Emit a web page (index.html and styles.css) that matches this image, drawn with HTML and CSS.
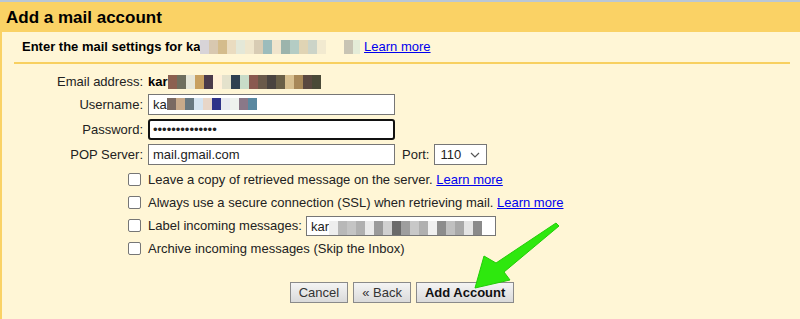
FILE: index.html
```html
<!DOCTYPE html>
<html lang="en">
<head>
  <meta charset="UTF-8" />
  <meta name="viewport" content="width=device-width, initial-scale=1.0" />
  <title>Add a mail account</title>
  <link rel="stylesheet" href="styles.css">
</head>
<body>
  <div class="dialog">
    <div class="dialog-head">Add a mail account</div>

    <div class="dialog-body">
      <div class="intro">
        Enter the mail settings for ka<span class="blur blur-intro"></span>
        <a href="#" class="link">Learn more</a>
      </div>
      <div class="rule"></div>

      <div class="form-row text-row">
        <label class="row-label">Email address:</label>
        <span class="email-value">kar<span class="blur blur-email"></span></span>
      </div>

      <div class="form-row">
        <label class="row-label" for="username">Username:</label>
        <div class="fake-input">ka<span class="blur blur-user"></span></div>
      </div>

      <div class="form-row">
        <label class="row-label" for="password">Password:</label>
        <input type="password" id="password" class="text-input focused" value="aaaaaaaaaaaaaa" />
      </div>

      <div class="form-row">
        <label class="row-label" for="pop">POP Server:</label>
        <input type="text" id="pop" class="text-input" value="mail.gmail.com" />
        <label class="port-label" for="port">Port:</label>
        <div class="fake-select">110
          <svg class="chev" width="10" height="6" viewBox="0 0 10 6"><path d="M1 1 L5 5 L9 1" fill="none" stroke="#555" stroke-width="1.2"/></svg>
        </div>
      </div>

      <div class="options">
        <div class="option">
          <span class="box"></span>
          <span>Leave a copy of retrieved message on the server. <a href="#" class="link">Learn more</a></span>
        </div>
        <div class="option">
          <span class="box"></span>
          <span>Always use a secure connection (SSL) when retrieving mail. <a href="#" class="link">Learn more</a></span>
        </div>
        <div class="option">
          <span class="box"></span>
          <span>Label incoming messages:</span>
          <div class="fake-input label-input">kar<span class="blur blur-label"></span></div>
        </div>
        <div class="option">
          <span class="box"></span>
          <span>Archive incoming messages (Skip the Inbox)</span>
        </div>
      </div>

      <div class="actions">
        <button class="btn">Cancel</button>
        <button class="btn">&laquo; Back</button>
        <button class="btn btn-main">Add Account</button>
      </div>
    </div>

    <svg class="arrow" width="800" height="319" viewBox="0 0 800 319">
      <polygon points="475,288 484,256 496,263 556,223 559,226 504,272 510,280" fill="#2ee80e" stroke="#22cc08" stroke-width="1" stroke-linejoin="round"/>
    </svg>
  </div>
</body>
</html>
```

FILE: styles.css
```css
* {
  box-sizing: border-box;
}

body {
  margin: 0;
  height: 319px;
  overflow: hidden;
  font-family: "Liberation Sans", Arial, sans-serif;
  font-size: 13px;
  color: #222;
  background: #fff6d6;
  border-top: 2px solid #b9c7d6;
}

.dialog {
  position: relative;
  height: 317px;
  border-left: 2px solid #fad265;
  background: #fff6d6;
}

.dialog-head {
  height: 30px;
  line-height: 31px;
  padding-left: 4px;
  background: #fad265;
  font-size: 17px;
  font-weight: bold;
  color: #000;
}

.dialog-body {
  padding: 7px 10px 0 12px;
}

.intro {
  padding-left: 8px;
  height: 16px;
  line-height: 16px;
  font-weight: bold;
  color: #000;
}

.link {
  color: #0000ee;
  font-weight: normal;
  text-decoration: underline;
}

.rule {
  height: 2px;
  margin-top: 7px;
  background: #f8d060;
}

.blur {
  display: inline-block;
  vertical-align: -3px;
}

.blur-intro {
  width: 160px;
  height: 14px;
  background:
    linear-gradient(90deg, #d8d4d8 0 9px, #d8c8b0 9px 18px, #d4bc8c 18px 27px, #eadcc0 27px 36px, #e4e8d8 36px 45px, #efe6cc 45px 54px, #d8ccb4 54px 63px, #9cbcbc 63px 72px, #f0e4cc 72px 81px, #9cb4ac 81px 90px, #b4ccc4 90px 99px, #e0d4b4 99px 108px, #ccd4c8 108px 117px, #f2ead0 117px 126px, #fff6d6 126px 144px, #c8c4b4 144px 153px, #e4ecd8 153px 160px);
}

.blur-email {
  width: 153px;
  height: 14px;
  background:
    linear-gradient(90deg, #8b6050 0 9px, #6e6e5e 9px 18px, #e6e6d8 18px 27px, #c8a060 27px 36px, #4a3a4a 36px 45px, #fff0d8 45px 54px, #e4e2cc 54px 63px, #2e4050 63px 72px, #c8dcc8 72px 81px, #8a5a50 81px 90px, #6a5a4a 90px 99px, #4a4440 99px 108px, #6a6048 108px 117px, #d8c090 117px 126px, #a88858 126px 135px, #5a4840 135px 144px, #4a4a38 144px 153px);
}

.blur-user {
  width: 90px;
  height: 12px;
  vertical-align: -1px;
  background:
    linear-gradient(90deg, #7a6a62 0 9px, #c8aa8a 9px 18px, #687880 18px 27px, #d6e4f0 27px 36px, #e8d6c8 36px 45px, #2e3288 45px 54px, #e8eaf0 54px 63px, #eef2ee 63px 72px, #8a7888 72px 81px, #5a88a0 81px 90px);
}

.blur-label {
  width: 165px;
  height: 15px;
  vertical-align: -5px;
  background:
    linear-gradient(90deg, #eeeeee 0 9px, #b8b8b8 9px 18px, #c4c4c4 18px 27px, #b0b0b0 27px 36px, #eaeaea 36px 45px, #9a9a9a 45px 54px, #d0d0d0 54px 63px, #6a6a6a 63px 72px, #9e9e9e 72px 81px, #c8c8c8 81px 90px, #b0b0b0 90px 99px, #f0f0f0 99px 108px, #8c8c8c 108px 117px, #c0c0c0 117px 126px, #a8a8a8 126px 135px, #e4e4e4 135px 144px, #8a8a8a 144px 153px, #ffffff 153px 165px);
}

.form-row {
  display: flex;
  align-items: center;
  height: 25px;
}

.text-row {
  margin-top: 6px;
  height: 22px;
}

.row-label {
  width: 129px;
  margin-right: 5px;
  text-align: right;
  color: #222;
}

.email-value {
  font-weight: bold;
  color: #000;
}

.text-input,
.fake-input {
  width: 247px;
  height: 21px;
  padding: 0 4px;
  border: 1px solid #767676;
  background: #fff;
  font-family: "Liberation Sans", Arial, sans-serif;
  font-size: 13px;
  color: #222;
  line-height: 19px;
}

.fake-input {
  white-space: nowrap;
  overflow: hidden;
}

.text-input.focused {
  border: 2px solid #111;
  border-radius: 3px;
  padding: 0 3px;
  outline: none;
}

.port-label {
  margin-left: 7px;
  margin-right: 5px;
}

.fake-select {
  display: flex;
  align-items: center;
  justify-content: space-between;
  width: 53px;
  height: 21px;
  padding: 0 6px 0 5px;
  border: 1px solid #767676;
  background: #fff;
}

.options {
  margin-top: 1px;
  padding-left: 114px;
}

.option {
  display: flex;
  align-items: center;
  height: 23px;
}

.box {
  width: 13px;
  height: 13px;
  margin-right: 7px;
  border: 1px solid #767676;
  border-radius: 2px;
  background: #fff;
}

.label-input {
  width: 190px;
  height: 20px;
  margin-left: 4px;
  padding: 0 0 0 4px;
}

.actions {
  display: flex;
  justify-content: center;
  gap: 5px;
  margin-top: 22px;
}

.btn {
  height: 21px;
  padding: 0 8px;
  border: 1px solid #8a8a8a;
  background: linear-gradient(#f4f4f4, #dadada);
  font-family: "Liberation Sans", Arial, sans-serif;
  font-size: 13px;
  color: #333;
}

.btn-main {
  font-weight: bold;
  color: #111;
}

.arrow {
  position: absolute;
  left: -2px;
  top: -2px;
  pointer-events: none;
}
```
